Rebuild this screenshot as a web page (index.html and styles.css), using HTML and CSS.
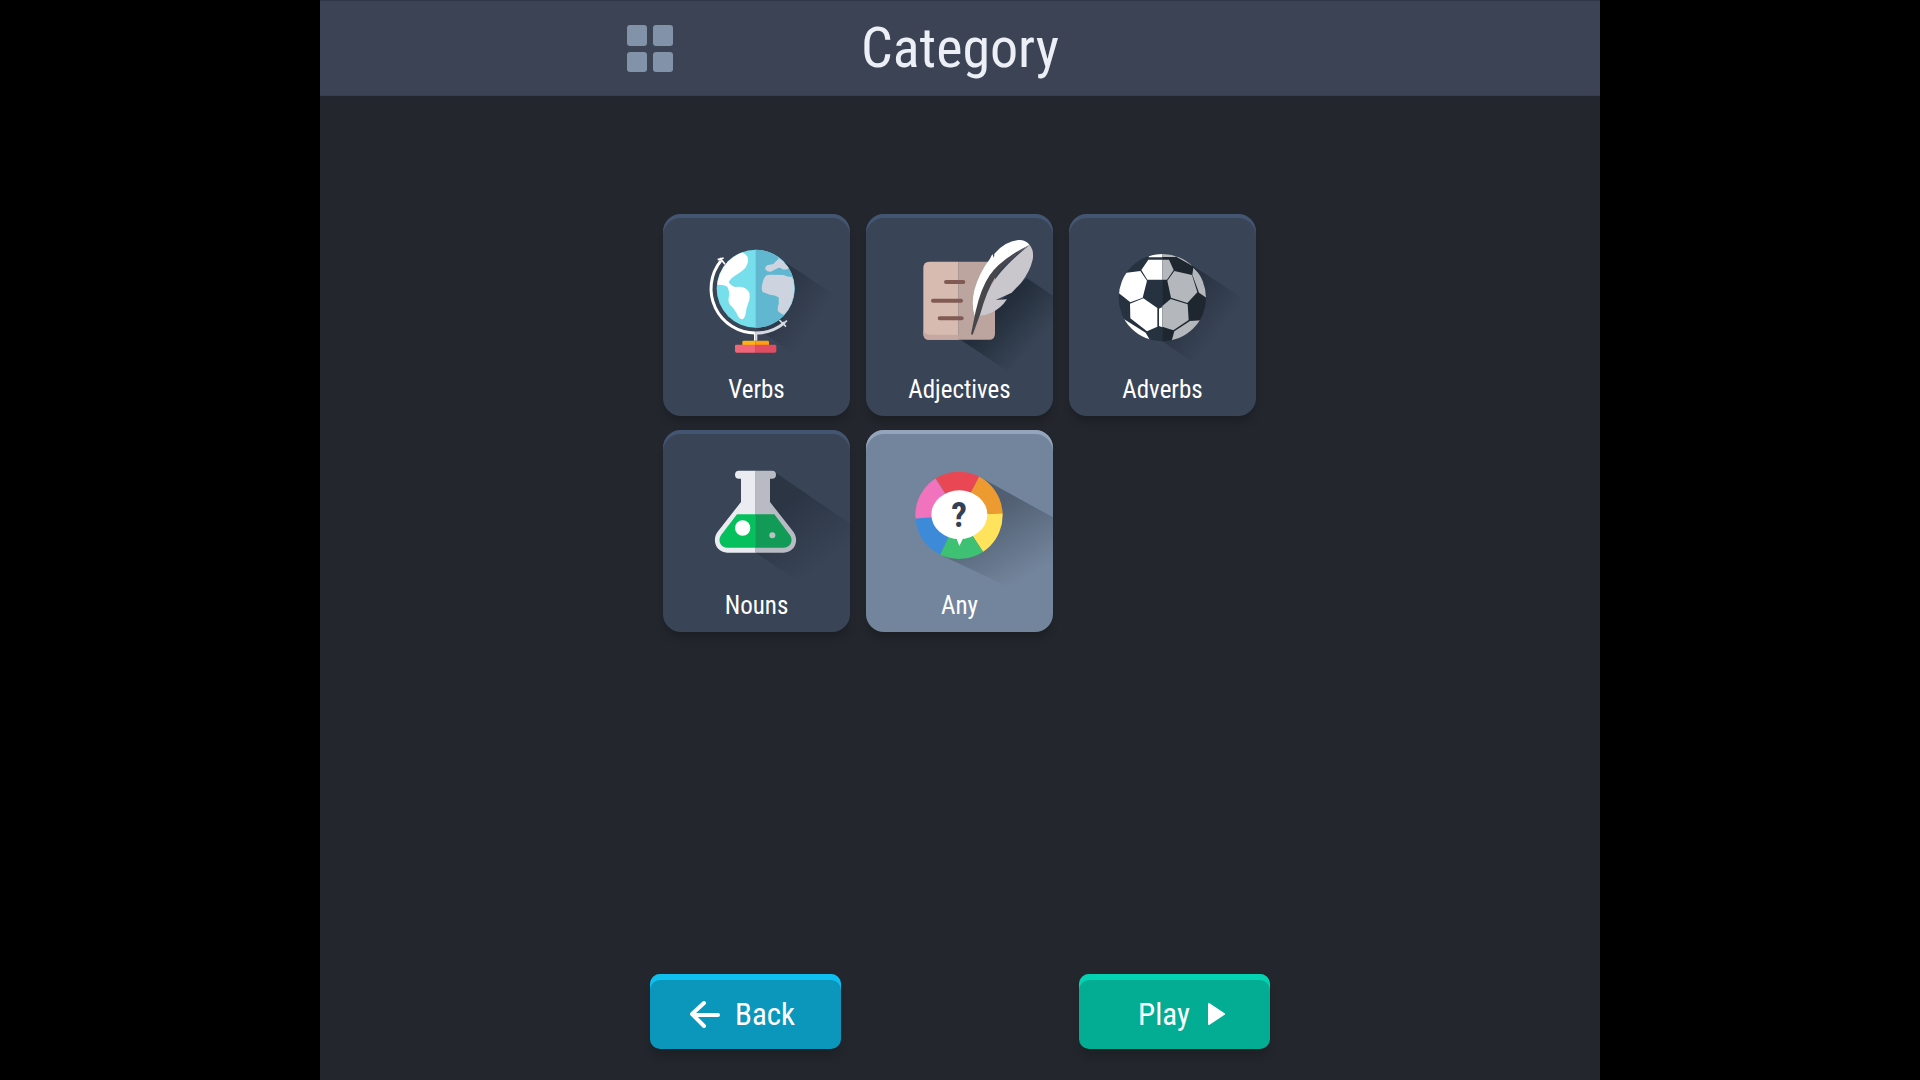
FILE: index.html
```html
<!DOCTYPE html>
<html lang="en">
<head>
<meta charset="utf-8">
<meta name="viewport" content="width=device-width, initial-scale=1">
<title>Category</title>
<link rel="stylesheet" href="styles.css">
</head>
<body>
<div class="stage">
  <header class="header">
    <div class="header-inner">
      <svg class="grid-icon" viewBox="0 0 47 47" aria-hidden="true">
        <rect width="20" height="21" rx="3"/><rect x="26" width="20" height="21" rx="3"/>
        <rect y="27" width="20" height="20" rx="3"/><rect x="26" y="27" width="20" height="20" rx="3"/>
      </svg>
      <h1 class="title">Category</h1>
    </div>
  </header>

  <main class="main">
    <div class="cards">
      <button class="card" type="button" aria-pressed="false">
        <svg class="art" viewBox="39 28 561 480" aria-hidden="true">
          <defs>
            <linearGradient id="shade-globe" gradientUnits="userSpaceOnUse" x1="370" y1="250" x2="505" y2="345">
              <stop offset="0" stop-color="#232a38" stop-opacity=".65"/><stop offset="1" stop-color="#232a38" stop-opacity="0"/>
            </linearGradient>
            <clipPath id="globe"><circle cx="317" cy="252" r="116"/></clipPath>
          </defs>
          <path fill="url(#shade-globe)" d="M395 166 600 300V500H510L350 392 317 368Z"/>
          <path fill="none" stroke="#fff" stroke-width="9" d="M213 168A133 133 0 0 0 317 385"/>
          <path fill="none" stroke="#d5dae2" stroke-width="9" d="M317 385A133 133 0 0 0 404 354"/>
          <path fill="none" stroke="#fff" stroke-width="5" d="M210 160 225 179M203 165 221 160"/>
          <path fill="none" stroke="#d5dae2" stroke-width="5" d="M388 346 408 366M398 358 411 348"/>
          <path fill="#fff" d="M312 388h5v20h-5z"/><path fill="#d5dae2" d="M317 388h5v20h-5z"/>
          <circle cx="317" cy="252" r="117" fill="#77deec"/>
          <path fill="#62b7d0" d="M317 135A117 117 0 0 1 317 369Z"/>
          <g clip-path="url(#globe)">
            <path fill="#fff" d="M195 240 200 170 260 130 286 149Q298 158 292 178L286 190Q276 200 264 207 244 218 236 232 242 244 256 247 284 242 297 262 302 278 295 294 288 312 287 328 283 344 275 344 264 340 260 326 250 308 240 300 232 290 238 272 238 258 232 246 220 239 200 241Z"/>
            <path fill="#cdd4e0" d="M379 140 386 163Q376 170 370 178L352 182Q344 186 346 194 350 202 362 201L384 190Q392 188 396 193 408 198 420 189L440 190V130Z"/>
            <path fill="#cdd4e0" d="M350 212 360 210 400 211Q412 217 425 217L450 230V340L400 330Q390 326 383 318L384 304Q388 298 386 292L386 278Q374 270 360 270L338 262Q333 254 337 238 340 220 350 212Z"/>
          </g>
          <path fill="#ffb30f" d="M317 408h-36q-4 0-4 4v9h40z"/><path fill="#ff9f0c" d="M317 408h36q4 0 4 4v9h-40z"/>
          <path fill="#f26478" d="M317 420h-58q-4 0-4 4v15q0 5 5 5h57z"/><path fill="#e04d62" d="M317 420h58q4 0 4 4v15q0 5-5 5h-57z"/>
        </svg>
        <span class="label">Verbs</span>
      </button>

      <button class="card" type="button" aria-pressed="false">
        <svg class="art" viewBox="33 28 561 480" aria-hidden="true">
          <defs>
            <linearGradient id="shade-paper" gradientUnits="userSpaceOnUse" x1="430" y1="320" x2="540" y2="420">
              <stop offset="0" stop-color="#1d2734" stop-opacity=".8"/><stop offset="1" stop-color="#1d2734" stop-opacity="0"/>
            </linearGradient>
          </defs>
          <path fill="url(#shade-paper)" d="M515 220 594 273V508H470L312 402 400 320Z"/>
          <path fill="#d7bbb1" d="M311 171h-88q-18 0-18 18v198q0 18 18 18h88z"/>
          <path fill="#c5a8a1" d="M205 376q4 14 18 14h88v15h-88q-18 0-18-18z"/>
          <path fill="#bca49f" d="M311 171h91q18 0 18 18v198q0 18-18 18h-91z"/>
          <path fill="none" stroke="#815a53" stroke-width="12" stroke-linecap="round" d="M273 232h52M234 288h84M254 341h66"/>
          <path fill="#fff" d="M359 333Q348 300 358 257 372 205 405 162L412 148 417 160 418 147Q450 110 490 106 512 105 524 121Q450 165 412 220Z"/>
          <path fill="#c9c6cc" d="M524 121Q538 138 533 165 525 200 498 235L470 264 422 286 456 284Q437 312 410 324 390 333 372 333L385 290Q412 210 524 121Z"/>
          <path fill="#47464b" d="M524 120Q435 165 404 212 378 250 362 320L348 389 353 390 376 327Q395 258 423 213 452 165 524 120Z"/>
        </svg>
        <span class="label">Adjectives</span>
      </button>

      <button class="card" type="button" aria-pressed="false">
        <svg class="art" viewBox="27 28 561 480" aria-hidden="true">
          <defs>
            <linearGradient id="shade-ball" gradientUnits="userSpaceOnUse" x1="375" y1="270" x2="495" y2="360">
              <stop offset="0" stop-color="#202938" stop-opacity=".65"/><stop offset="1" stop-color="#202938" stop-opacity="0"/>
            </linearGradient>
            <clipPath id="ball"><circle cx="307" cy="279" r="131"/></clipPath>
          </defs>
          <path fill="url(#shade-ball)" d="M394 180 588 306V508H450L307 410Z"/>
          <g clip-path="url(#ball)">
            <path fill="#263240" d="M170 140h137v280H170z"/><path fill="#1e2630" d="M307 140h140v280H307z"/>
            <path fill="#fff" d="M268 148h39v10h-41zM265 165h42v60h-45L244 196ZM241 199 261 228 248 279 211 293 175 264V220L194 205ZM250 281 292 310V366L261 380 211 341 210 297ZM170 330 195 345 257 384 272 410H200ZM297 312 307 307V368L297 364Z"/>
            <path fill="#b4b7bc" d="M307 148h36l4 9h-40zM307 165h20L341 196 321 225H307ZM343 199 396 211 412 263 382 295 333 279 322 228ZM307 304 332 283 383 299 386 346 340 377 307 366ZM343 380 390 349 425 347 390 400 334 412ZM400 189 440 230V280L417 264 397 210ZM343 153 370 158 410 190 398 184Z"/>
          </g>
        </svg>
        <span class="label">Adverbs</span>
      </button>

      <button class="card" type="button" aria-pressed="false">
        <svg class="art" viewBox="39 31 561 480" aria-hidden="true">
          <defs>
            <linearGradient id="shade-flask" gradientUnits="userSpaceOnUse" x1="400" y1="260" x2="530" y2="430">
              <stop offset="0" stop-color="#27303f" stop-opacity=".75"/><stop offset="1" stop-color="#27303f" stop-opacity="0"/>
            </linearGradient>
          </defs>
          <path fill="url(#shade-flask)" d="M375 158 600 312V511H485L317 399V200Z"/>
          <path fill="#eaecf2" d="M317 153h-50a12 12 0 0 0 0 24h6v70L203 336C184 362 199 399 232 399h85z"/>
          <path fill="#b8bbc3" d="M316 153h50a12 12 0 0 1 0 24h-6v70L430 336C449 362 434 399 401 399h-85z"/>
          <path fill="#05c05c" d="M317 284h-56L214 345C201 362 212 384 232 384h85z"/>
          <path fill="#129a57" d="M316 284h57L419 345C432 362 421 384 401 384h-85z"/>
          <circle cx="278" cy="325" r="23" fill="#fff"/><circle cx="367" cy="347" r="9" fill="#b8c4c2"/>
        </svg>
        <span class="label">Nouns</span>
      </button>

      <button class="card card-selected" type="button" aria-pressed="true">
        <svg class="art" viewBox="33 31 561 480" aria-hidden="true">
          <defs>
            <linearGradient id="shade-wheel" gradientUnits="userSpaceOnUse" x1="400" y1="270" x2="515" y2="475">
              <stop offset="0" stop-color="#4b586a" stop-opacity=".85"/><stop offset="1" stop-color="#4b586a" stop-opacity="0"/>
            </linearGradient>
            <clipPath id="wheel"><circle cx="312" cy="287" r="131"/></clipPath>
          </defs>
          <path fill="url(#shade-wheel)" d="M373 171 594 293V511H480L256 405Z"/>
          <g clip-path="url(#wheel)">
            <path fill="#e94753" d="M312 287 230 156V140H388L373 170Z"/>
            <path fill="#ed9b31" d="M312 287 373 170 390 140H460V281L443 281Z"/>
            <path fill="#ffe35c" d="M312 287 460 280V440H410L384 396Z"/>
            <path fill="#3fc174" d="M312 287 384 396 410 440H236L255 405Z"/>
            <path fill="#3d8bd8" d="M312 287 255 405 236 440H160V298Z"/>
            <path fill="#f172bd" d="M312 287 160 298V140H219L242 178Z"/>
          </g>
          <ellipse cx="313" cy="285" rx="84" ry="73" fill="#fff"/><path fill="#fff" d="M304 354 313 379 325 354Z"/>
          <text class="mark" x="312" y="321" text-anchor="middle">?</text>
        </svg>
        <span class="label">Any</span>
      </button>
    </div>
  </main>

  <footer class="footer">
    <button class="action back" type="button">
      <svg class="arrow" viewBox="0 0 30 27" aria-hidden="true"><path d="M14 2 2 13 14 25M3 14H28"/></svg>
      <span>Back</span>
    </button>
    <button class="action play" type="button">
      <span>Play</span>
      <svg class="triangle" viewBox="0 0 19 24" aria-hidden="true"><path d="M2 2V22L17 12Z"/></svg>
    </button>
  </footer>
</div>
</body>
</html>
```
FILE: styles.css
```css
* { box-sizing: border-box; }

body {
  margin: 0;
  background: #000;
  font-family: "Roboto Condensed", "Liberation Sans Narrow", Roboto, sans-serif;
}

button {
  margin: 0;
  padding: 0;
  border: 0;
  color: #fff;
  font: inherit;
  cursor: pointer;
}

svg { display: block; }

.stage {
  display: flex;
  flex-direction: column;
  max-width: 1280px;
  min-height: 100vh;
  margin: 0 auto;
  background: #23262d;
}

.header {
  padding: 0 16px;
  border-top: 1px solid #2f3747;
  border-bottom: 1px solid #363e4f;
  background: #3b4354;
}

.header-inner {
  display: grid;
  grid-template-columns: 1fr auto 1fr;
  align-items: center;
  max-width: 666px;
  height: 94px;
  margin: 0 auto;
}

.grid-icon { width: 47px; height: 47px; fill: #8292a8; }

.title {
  margin: 0;
  color: #eceff5;
  font-size: 56px;
  font-weight: 400;
  line-height: 66px;
}

.main { flex: 1; padding: 118px 16px 32px; }

.cards {
  display: grid;
  grid-template-columns: repeat(auto-fit, 187px);
  gap: 14px 16px;
  max-width: 594px;
  margin: 0 auto;
}

.card {
  display: flex;
  flex-direction: column;
  height: 202px;
  overflow: hidden;
  border-radius: 18px;
  background: #394456;
  box-shadow: inset 0 4px #435570, 0 8px 6px -2px #1d2025;
}

.card-selected {
  background: #73859d;
  box-shadow: inset 0 4px #94a4bb, 0 8px 6px -2px #1d2025;
}

.art { width: 187px; height: 160px; }

.label {
  width: 100%;
  font-size: 25px;
  line-height: 32px;
  text-align: center;
}

.mark { fill: #344055; font-size: 105px; font-weight: 700; }

.footer {
  display: flex;
  justify-content: space-between;
  width: 100%;
  max-width: 620px;
  margin: 0 auto;
  padding-bottom: 31px;
}

.action {
  display: flex;
  align-items: center;
  justify-content: center;
  width: 191px;
  height: 75px;
  padding-top: 5px;
  border-radius: 10px;
  font-size: 31px;
}

.back {
  gap: 15px;
  padding-right: 6px;
  background: #0b96bb;
  box-shadow: inset 0 6px #0ebfef, 0 9px 6px -2px #1e2126;
}

.play {
  gap: 17px;
  padding-left: 15px;
  background: #02ad94;
  box-shadow: inset 0 6px #03d3b3, 0 9px 6px -2px #1e2126;
}

.arrow {
  width: 30px;
  height: 27px;
  fill: none;
  stroke: #fff;
  stroke-width: 4;
  stroke-linecap: round;
  stroke-linejoin: round;
}

.triangle {
  width: 19px;
  height: 24px;
  fill: #fff;
  stroke: #fff;
  stroke-width: 2;
  stroke-linejoin: round;
}
```
